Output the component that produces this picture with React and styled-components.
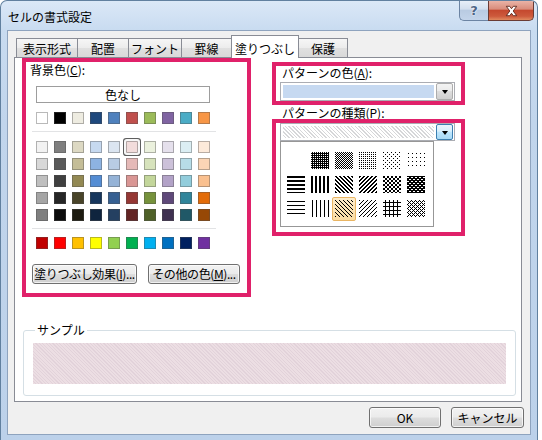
import React from 'react';
import styled, { createGlobalStyle, css } from 'styled-components';

const GlobalStyle = createGlobalStyle`
  html, body {
    margin: 0;
    padding: 0;
    background: #ffffff;
  }
  body {
    font-family: "Noto Sans CJK JP", "Noto Sans", sans-serif;
    font-size: 12px;
    color: #000000;
  }
  * {
    box-sizing: border-box;
  }
`;

const THEME_BASE = ['#FFFFFF', '#000000', '#EEECE1', '#1F497D', '#4F81BD', '#C0504D', '#9BBB59', '#8064A2', '#4BACC6', '#F79646'];

const THEME_SHADES = [
  ['#F2F2F2', '#7F7F7F', '#DDD9C3', '#C6D9F0', '#DBE5F1', '#F2DCDB', '#EBF1DD', '#E5E0EC', '#DBEEF3', '#FDEADA'],
  ['#D8D8D8', '#595959', '#C4BD97', '#8DB3E2', '#B8CCE4', '#E5B9B7', '#D7E3BC', '#CCC1D9', '#B7DDE8', '#FBD5B5'],
  ['#BFBFBF', '#3F3F3F', '#938953', '#548DD4', '#95B3D7', '#D99694', '#C3D69B', '#B2A2C7', '#92CDDC', '#FAC08F'],
  ['#A5A5A5', '#262626', '#494429', '#17365D', '#366092', '#953734', '#76923C', '#5F497A', '#31859B', '#E36C09'],
  ['#7F7F7F', '#0C0C0C', '#1D1B10', '#0F243E', '#244061', '#632423', '#4F6128', '#3F3151', '#205867', '#974806'],
];

const STANDARD = ['#C00000', '#FF0000', '#FFC000', '#FFFF00', '#92D050', '#00B050', '#00B0F0', '#0070C0', '#002060', '#7030A0'];

const TABS = [
  { label: '表示形式', w: 62 },
  { label: '配置', w: 52 },
  { label: 'フォント', w: 54 },
  { label: '罫線', w: 51 },
  { label: '塗りつぶし', w: 68, active: true },
  { label: '保護', w: 50 },
];

// 8x8 style fill patterns, as they appear in the pattern picker
const mod = (a, n) => ((a % n) + n) % n;
const PATTERNS = [
  null,
  (x, y) => !(y % 2 === 0 && x % 2 === 0),
  (x, y) => (x + y) % 2 === 0,
  (x, y) => y % 2 === 0 && x % 2 === 0,
  (x, y) => (y % 4 === 0 && x % 4 === 0) || (y % 4 === 2 && x % 4 === 2),
  (x, y) => y % 4 === 1 && x % 4 === 1,
  (x, y) => y % 4 < 2,
  (x, y) => x % 4 < 2,
  (x, y) => mod(x - y, 4) < 2,
  (x, y) => mod(x + y, 4) < 2,
  (x, y) => (Math.floor(x / 2) + Math.floor(y / 2)) % 2 === 0,
  (x, y) => !(y % 2 === 1 && mod(x + (y % 4 === 1 ? 0 : 2), 4) < 2),
  (x, y) => y % 4 === 1,
  (x, y) => x % 4 === 1,
  (x, y) => mod(x - y, 4) === 0,
  (x, y) => mod(x + y, 4) === 0,
  (x, y) => x % 4 === 2 || y % 4 === 2,
  (x, y) => mod(x + y, 4) === 0 || mod(x - y, 4) === 0,
];

const patternPath = (fn, w, h) => {
  let d = '';
  for (let y = 0; y < h; y++) {
    let x = 0;
    while (x < w) {
      if (fn(x, y)) {
        const s = x;
        while (x < w && fn(x, y)) x++;
        d += `M${s} ${y}h${x - s}v1h-${x - s}z`;
      } else {
        x++;
      }
    }
  }
  return d;
};

const Window = styled.div`
  width: 538px;
  height: 440px;
  border: 1px solid #61809f;
  border-bottom: none;
  border-radius: 7px 7px 0 0;
  background: linear-gradient(180deg, #dbe8f7 0px, #c8dbf0 30px, #c1d5ec 120px, #bcd1ea 100%);
  display: flex;
  flex-direction: column;
  overflow: hidden;
`;

const TitleBar = styled.div`
  height: 29px;
  display: flex;
  align-items: flex-start;
  padding-left: 7px;
  flex-shrink: 0;
`;

const Title = styled.div`
  line-height: 29px;
  padding-top: 1px;
  font-size: 12px;
  color: #000;
`;

const CaptionGroup = styled.div`
  margin-left: auto;
  margin-right: 3px;
  display: flex;
`;

const CaptionButton = styled.div`
  height: 20px;
  display: flex;
  align-items: center;
  justify-content: center;
  ${p => p.$kind === 'close' ? css`
    width: 46px;
    border: 1px solid #6a3b34;
    border-top: none;
    border-radius: 0 0 5px 0;
    background: linear-gradient(180deg, #eab3a6 0%, #d98d7c 42%, #c5492f 50%, #cd5a3c 80%, #e08a5f 100%);
  ` : css`
    width: 29px;
    border: 1px solid #6c84a3;
    border-top: none;
    border-right: none;
    border-radius: 0 0 0 5px;
    background: linear-gradient(180deg, #e8eff8 0%, #d3dfee 42%, #b9cbe2 50%, #c3d4ea 100%);
  `}
`;

const HelpGlyph = styled.span`
  font-family: "DejaVu Sans", sans-serif;
  font-weight: bold;
  font-size: 13px;
  line-height: 1;
  color: #4d6486;
  text-shadow: 0 0 2px #ffffff, 0 0 1px #ffffff;
`;

const Client = styled.div`
  flex: 1;
  margin: 0 6px 5px 6px;
  background: #f0f0f0;
  border: 1px solid #8ea3be;
  padding: 4px 0 0 6px;
  display: flex;
  flex-direction: column;
`;

const TabRow = styled.div`
  height: 22px;
  display: flex;
  align-items: flex-end;
  padding-left: 2px;
  position: relative;
  z-index: 1;
`;

const Tab = styled.div`
  width: ${p => p.$w}px;
  height: 19px;
  margin-right: -1px;
  border: 1px solid #898c95;
  border-bottom: none;
  padding-top: 1px;
  line-height: 17px;
  text-align: center;
  white-space: nowrap;
  background: linear-gradient(180deg, #f6f6f6 0%, #ececec 50%, #e0e0e0 52%, #d9d9d9 100%);
  ${p => p.$active && css`
    height: 23px;
    padding-top: 4px;
    margin-bottom: -1px;
    background: #ffffff;
  `}
`;

const Panel = styled.div`
  width: 508px;
  height: 345px;
  border: 1px solid #898c95;
  background: #ffffff;
  display: flex;
  flex-direction: column;
`;

const TopArea = styled.div`
  display: flex;
  align-items: flex-start;
  padding-left: 7px;
`;

const Highlight = styled.div`
  width: ${p => p.$w}px;
  height: ${p => p.$h}px;
  border: 4px solid #e0216a;
  display: flex;
  flex-direction: column;
  align-items: flex-start;
`;

const FieldLabel = styled.div`
  line-height: ${p => p.$lh || 14}px;
  padding-left: ${p => p.$pl}px;
  margin-top: ${p => p.$mt || 0}px;
  white-space: nowrap;
`;

const NoColorButton = styled.div`
  width: 174px;
  height: 17px;
  margin: 9px 0 0 10px;
  border: 1px solid #9d9d9d;
  background: #ffffff;
  text-align: center;
  line-height: 15px;
`;

const SwatchGrid = styled.div`
  display: grid;
  grid-template-columns: repeat(10, 12px);
  grid-auto-rows: 12px;
  column-gap: 6px;
  row-gap: 5px;
  margin: ${p => p.$mt}px 0 0 10px;
`;

const Swatch = styled.div`
  width: 12px;
  height: 12px;
  background: ${p => p.$c};
  border: 1px solid rgba(80, 80, 80, 0.4);
  ${p => p.$hover && css`
    box-shadow: 0 0 0 2px #f7f7f7, 0 0 0 3px #5e5e5e;
    border-radius: 1px;
  `}
`;

const Separator = styled.div`
  width: 184px;
  height: 1px;
  margin: 7px 0 0 6px;
  background: #e2e3e5;
`;

const ButtonRow = styled.div`
  display: flex;
  gap: 11px;
  margin: 15px 0 0 6px;
`;

const PushButton = styled.div`
  width: ${p => p.$w}px;
  height: ${p => p.$h || 21}px;
  border: 1px solid #707070;
  border-radius: 3px;
  background: linear-gradient(180deg, #f2f2f2 0%, #ebebeb 48%, #dddddd 52%, #cfcfcf 100%);
  box-shadow: inset 0 0 0 1px rgba(255, 255, 255, 0.7);
  display: flex;
  align-items: center;
  justify-content: center;
  white-space: nowrap;
  line-height: 1;
  letter-spacing: ${p => p.$tight ? '-0.4px' : '0'};
`;

const RightColumn = styled.div`
  display: flex;
  flex-direction: column;
  margin: 4px 0 0 21px;
`;

const Combo = styled.div`
  width: 175px;
  height: ${p => p.$h}px;
  margin: ${p => p.$mt || 0}px 0 0 4px;
  border: 1px solid #abadb3;
  background: #ffffff;
  display: flex;
  flex-shrink: 0;
`;

const ComboFill = styled.div`
  width: 151px;
  margin: 2px;
  background: ${p => p.$hatch
    ? 'repeating-linear-gradient(45deg, #ffffff 0px, #ffffff 1.6px, #d6d7d9 1.6px, #d6d7d9 2.6px)'
    : '#c6d9f1'};
`;

const DropButton = styled.div`
  width: 17px;
  margin-right: 1px;
  display: flex;
  align-items: center;
  justify-content: center;
  ${p => p.$hot ? css`
    border: 1px solid #3c7fb1;
    border-radius: 2px;
    background: linear-gradient(180deg, #eaf6fd 0%, #d9f0fc 45%, #bee6fd 50%, #a7d9f5 100%);
  ` : css`
    border: 1px solid #acacac;
    border-radius: 2px;
    background: linear-gradient(180deg, #f3f3f3 0%, #ebebeb 45%, #dddddd 50%, #cfcfcf 100%);
  `}
`;

const Arrow = styled.div`
  width: 0;
  height: 0;
  border-top: 4px solid #000000;
  border-left: 3.5px solid transparent;
  border-right: 3.5px solid transparent;
  margin-top: 1px;
`;

const Popup = styled.div`
  width: 154px;
  height: 86px;
  margin-left: 4px;
  border: 1px solid #979797;
  background: #ffffff;
  padding: 7px 0 0 3px;
`;

const PatternGrid = styled.div`
  display: grid;
  grid-template-columns: repeat(6, 24px);
  grid-auto-rows: 24px;
`;

const PatternCell = styled.div`
  border: 1px solid transparent;
  padding-top: 2px;
  display: flex;
  justify-content: center;
  align-items: flex-start;
  ${p => p.$sel && css`
    border-color: #e9b563;
    border-radius: 2px;
    background: linear-gradient(180deg, #fdeccb 0%, #fbdca2 100%);
  `}
`;

const SampleGroup = styled.fieldset`
  width: 493px;
  margin: 26px 0 0 8px;
  padding: 6px 9px 11px 9px;
  border: 1px solid #d5dfe5;
  border-radius: 3px;
  min-width: 0;
`;

const SampleLegend = styled.legend`
  padding: 0 2px;
  margin-left: 2px;
  line-height: 14px;
`;

const SampleFill = styled.div`
  height: 41px;
  background: repeating-linear-gradient(45deg, #ecdee3 0px, #ecdee3 1.5px, #e2d2da 1.5px, #e2d2da 2.4px);
`;

const Footer = styled.div`
  display: flex;
  justify-content: flex-end;
  gap: 10px;
  margin-top: 5px;
  padding-right: 6px;
`;

const Pattern = ({ fn }) => (
  <svg width="18" height="17" viewBox="0 0 18 17" shapeRendering="crispEdges">
    {fn && <path d={patternPath(fn, 18, 17)} fill="#000000" />}
  </svg>
);

const CloseGlyph = () => (
  <svg width="15" height="12" viewBox="0 0 15 12">
    <path
      d="M2.3 1.3h3.4l1.8 2.4 1.8-2.4h3.4l-3.5 4.7 3.5 4.7h-3.4l-1.8-2.4-1.8 2.4h-3.4l3.5-4.7z"
      fill="#ffffff"
      stroke="#5b2519"
      strokeWidth="0.9"
      strokeLinejoin="round"
    />
  </svg>
);

export default function App() {
  return (
    <>
      <GlobalStyle />
      <Window>
        <TitleBar>
          <Title>セルの書式設定</Title>
          <CaptionGroup>
            <CaptionButton $kind="help"><HelpGlyph>?</HelpGlyph></CaptionButton>
            <CaptionButton $kind="close"><CloseGlyph /></CaptionButton>
          </CaptionGroup>
        </TitleBar>

        <Client>
          <TabRow>
            {TABS.map(t => (
              <Tab key={t.label} $w={t.w} $active={t.active}>{t.label}</Tab>
            ))}
          </TabRow>

          <Panel>
            <TopArea>
              <Highlight $w={229} $h={239}>
                <FieldLabel $pl={4} $mt={1}>背景色(<u>C</u>):</FieldLabel>
                <NoColorButton>色なし</NoColorButton>
                <SwatchGrid $mt={9}>
                  {THEME_BASE.map((c, i) => <Swatch key={i} $c={c} />)}
                </SwatchGrid>
                <Separator />
                <SwatchGrid $mt={9}>
                  {THEME_SHADES.flatMap((row, r) =>
                    row.map((c, i) => <Swatch key={`${r}-${i}`} $c={c} $hover={r === 0 && i === 5} />)
                  )}
                </SwatchGrid>
                <Separator />
                <SwatchGrid $mt={8}>
                  {STANDARD.map((c, i) => <Swatch key={i} $c={c} />)}
                </SwatchGrid>
                <ButtonRow>
                  <PushButton $w={105} $h={20} $tight>塗りつぶし効果(<u>I</u>)...</PushButton>
                  <PushButton $w={92} $h={20} $tight>その他の色(<u>M</u>)...</PushButton>
                </ButtonRow>
              </Highlight>

              <RightColumn>
                <Highlight $w={193} $h={43}>
                  <FieldLabel $pl={6}>パターンの色(<u>A</u>):</FieldLabel>
                  <Combo $h={19} $mt={2}>
                    <ComboFill />
                    <DropButton><Arrow /></DropButton>
                  </Combo>
                </Highlight>
                <FieldLabel $pl={10} $mt={1} $lh={13}>パターンの種類(<u>P</u>):</FieldLabel>
                <Highlight $w={193} $h={117}>
                  <Combo $h={18}>
                    <ComboFill $hatch />
                    <DropButton $hot><Arrow /></DropButton>
                  </Combo>
                  <Popup>
                    <PatternGrid>
                      {PATTERNS.map((fn, i) => (
                        <PatternCell key={i} $sel={i === 14}>
                          <Pattern fn={fn} />
                        </PatternCell>
                      ))}
                    </PatternGrid>
                  </Popup>
                </Highlight>
              </RightColumn>
            </TopArea>

            <SampleGroup>
              <SampleLegend>サンプル</SampleLegend>
              <SampleFill />
            </SampleGroup>
          </Panel>

          <Footer>
            <PushButton $w={72}>OK</PushButton>
            <PushButton $w={73}>キャンセル</PushButton>
          </Footer>
        </Client>
      </Window>
    </>
  );
}
